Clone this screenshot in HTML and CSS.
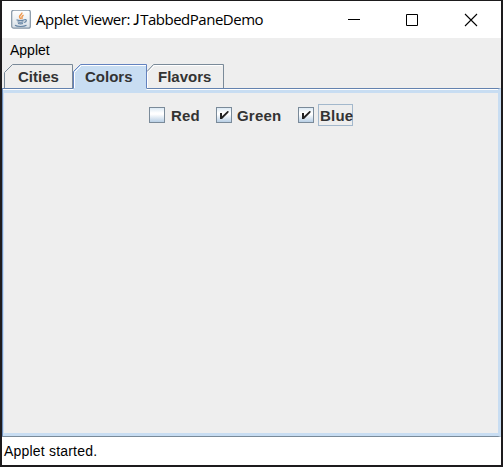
FILE: index.html
```html
<!DOCTYPE html>
<html lang="en">
<head>
<meta charset="utf-8">
<title>Applet Viewer: JTabbedPaneDemo</title>
<link rel="stylesheet" href="styles.css">
</head>
<body>
<div class="window">
  <header class="titlebar">
    <svg class="java" width="20" height="20" viewBox="0 0 20 20">
      <defs><linearGradient id="tile" x1="0" y1="0" x2="0" y2="1"><stop offset="0" stop-color="#fff"/><stop offset=".5" stop-color="#edf1f4"/><stop offset="1" stop-color="#d4dde5"/></linearGradient></defs>
      <rect x=".7" y=".2" width="18.6" height="18" rx="2" fill="url(#tile)" stroke="#8495a5" stroke-width="1.2"/>
      <path d="M10.8 2.500c1 2-3.800 3-1.900 5.300l.9 1.200M12.600 5.200c-2.500 1-1.800 2-1.400 3.800" fill="none" stroke="#ed984f" stroke-width="1.4"/>
      <path d="M5.500 9.700c2 .8 6 .8 8 0M6.500 11.700c2 .7 4 .7 6 0M7 13.500c2 .6 3.500.6 5 0M13.300 9.800c3-.8 2.500 2-.2 2.700M4 15.300c2 1.600 9 1.600 11.500 0" fill="none" stroke="#6483a2" stroke-width="1.15"/>
    </svg>
    <span class="title">Applet Viewer: <span class="cap">J</span>TabbedPaneDemo</span>
    <svg class="controls" width="130" height="14" viewBox="0 0 130 14" fill="none" stroke="#000">
      <path d="M0 6.500h12"/><path d="M58.500 1.500h11v11h-11z"/><path d="M117 1l12 12M129 1L117 13" stroke-width="1.1"/>
    </svg>
  </header>
  <nav class="menubar"><span>Applet</span></nav>
  <div class="tabs">
    <div class="tab cities"><svg class="outline" width="70" height="24"><path d="M1.500 24V8.500L9.500.5H69.500V24"/></svg><span>Cities</span></div>
    <div class="tab colors"><svg class="outline" width="74" height="26"><path class="fill" d="M.5 26V8L8 .5H73.500V26z"/><path class="shine" d="M1.500 24V8.500L8.500 1.500H73"/><path d="M.5 24V7.500L7.500.5H73.500V24"/></svg><span>Colors</span></div>
    <div class="tab flavors"><svg class="outline" width="77" height="24"><path class="shine" d="M.5 24V8.500L7.500 1.500H75"/><path d="M0 7.500L6.500.5H76.500V24"/></svg><span>Flavors</span></div>
  </div>
  <main class="pane">
    <div class="choices">
      <label class="choice red"><i class="box"></i><span>Red</span></label>
      <label class="choice green"><i class="box"><svg width="14" height="14"><path d="M3 5h2v3.200L10.500 3h1v1.500L5 11H3z"/></svg></i><span>Green</span></label>
      <label class="choice blue"><i class="box"><svg width="14" height="14"><path d="M3 5h2v3.200L10.500 3h1v1.500L5 11H3z"/></svg></i><span class="focus">Blue</span></label>
    </div>
  </main>
  <footer class="status"><span>Applet started.</span></footer>
</div>
</body>
</html>
```

FILE: styles.css
```css
* { box-sizing: border-box; }
body { margin: 0; font-family: "Liberation Sans", sans-serif; color: #000; }
.window { width: 503px; height: 467px; display: flex; flex-direction: column; border: 2px solid #1d1b1d; border-top-width: 1px; background: #eee; overflow: hidden; }
.titlebar { height: 37px; background: #fff; display: flex; align-items: center; padding-left: 9px; flex: none; }
.java { flex: none; margin-right: 5px; }
.title { width: 312px; flex: none; font: 15px/20px "Open Sans", sans-serif; letter-spacing: -.48px; white-space: nowrap; padding-bottom: 1px; }
.cap { font-family: Lato, sans-serif; margin-right: 1px; }
.controls { flex: none; overflow: visible; }
.menubar { height: 26px; padding: 3px 0 0 8px; font-size: 14px; line-height: 18px; flex: none; }
.tabs { display: flex; height: 24px; flex: none; }
.tab { position: relative; height: 24px; font-size: 15px; font-weight: bold; line-height: 25px; color: #333; white-space: nowrap; }
.tab span { position: relative; }
.cities { width: 71px; padding-left: 16px; }
.colors { width: 74px; padding-left: 12px; }
.flavors { width: 77px; padding-left: 11px; }
.outline { position: absolute; left: 0; top: 0; fill: none; stroke: #7a8a99; overflow: visible; }
.cities .outline { left: 1px; }
.colors .outline { stroke: #6382bf; }
.outline .fill { fill: #c8ddf2; stroke: none; }
.outline .shine { stroke: #fff; }
.pane { height: 349px; flex: none; border: 0 solid #c8ddf2; border-width: 1px 3px 1px 1px; border-top-color: #6382af; border-left-color: #6d8cb9; border-bottom-color: #7a8a99; padding: 4px 0 3px 2px; background: linear-gradient(#fff 0 1px, #c8ddf2 1px 4px, transparent 4px calc(100% - 3px), #c8ddf2 calc(100% - 3px)), linear-gradient(90deg, #c8ddf2 0 1px, #eee 1px); }
.choices { display: flex; padding: 11px 0 0 144px; height: 33px; font-size: 15px; font-weight: bold; line-height: 21px; color: #333; letter-spacing: .2px; }
.choice { display: flex; align-items: center; height: 22px; }
.red { width: 67px; }
.green { width: 82px; }
.box { width: 16px; height: 16px; border: 1px solid #7a8a99; background: linear-gradient(#dce9f4, #fff 35%, #fff 45%, #b8cfe5); margin-right: 6px; flex: none; display: block; }
.green .box, .blue .box { margin-right: 5px; }
.box svg { display: block; fill: #222; }
.focus { height: 22px; width: 35px; box-shadow: inset 0 0 0 1px #a3b8cc; padding-left: 2px; margin-left: -1px; line-height: 23px; }
.status { background: #fff; flex: 1; font-size: 14px; line-height: 28px; padding-left: 2px; letter-spacing: .2px; }
```
